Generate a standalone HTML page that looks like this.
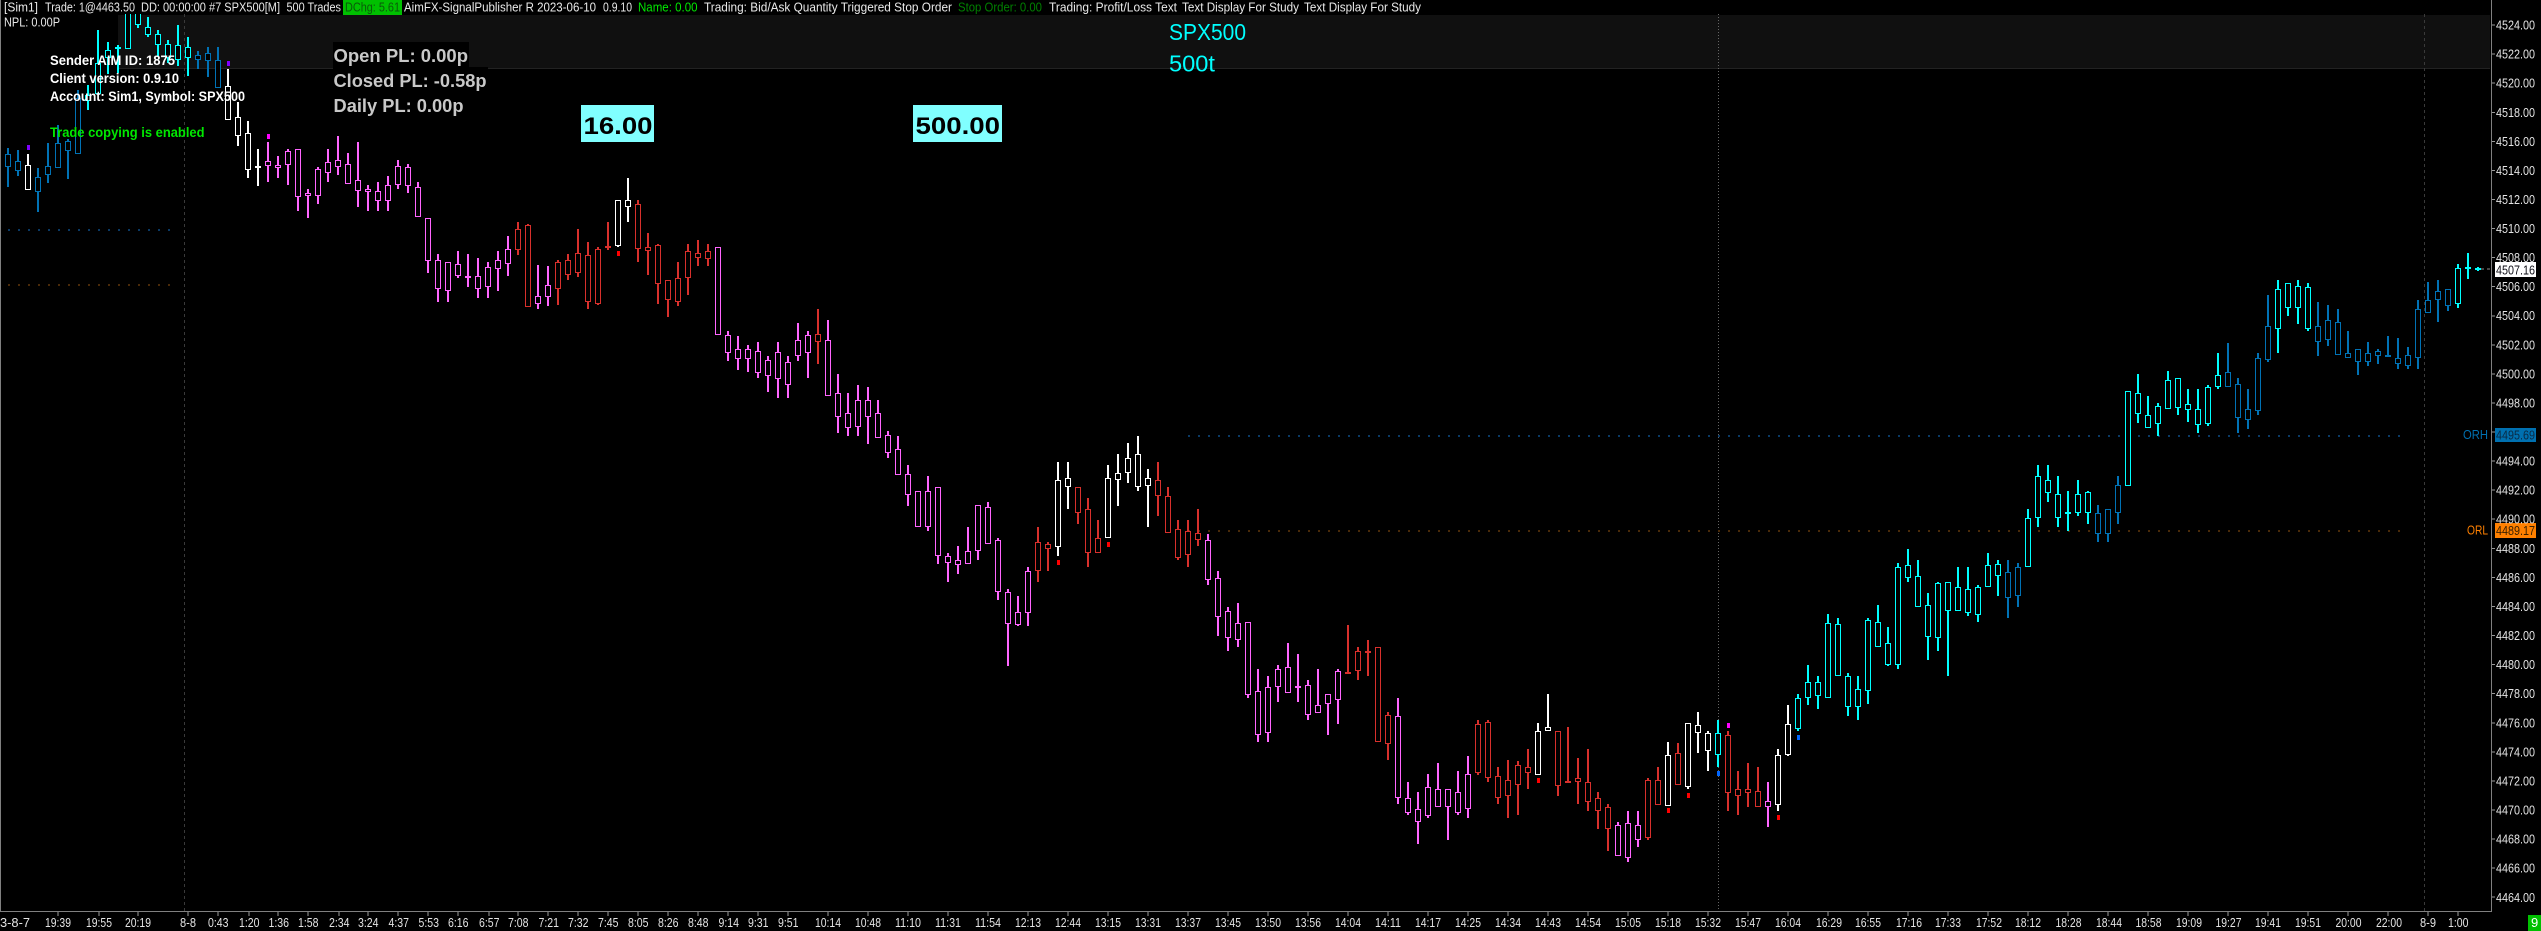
<!DOCTYPE html>
<html><head><meta charset="utf-8"><title>SPX500 chart</title>
<style>
html,body{margin:0;padding:0;background:#000;width:2541px;height:931px;overflow:hidden}
svg{position:absolute;left:0;top:0;display:block}
text{font-family:"Liberation Sans",sans-serif;white-space:pre}
.h{font-size:12.5px;fill:#e8e8e8}
.p{font-size:13px;fill:#e4e4e4}
.t{font-size:13px;fill:#e4e4e4}
.s{font-size:13.5px;font-weight:bold;fill:#fff}
.o{font-size:18px;font-weight:bold;fill:#c8c8c8}
.b{font-size:24px;font-weight:bold;fill:#000}
.c{font-size:23px;fill:#00ffff}
</style></head><body>
<svg width="2541" height="931" viewBox="0 0 2541 931" xmlns="http://www.w3.org/2000/svg">
<rect width="2541" height="931" fill="#000"/>
<rect x="118" y="15" width="2372" height="53" fill="#101010"/>
<rect x="118" y="68" width="2372" height="1" fill="#222"/>
<g shape-rendering="crispEdges">
<path d="M184.5 14V911M2424.5 14V911" stroke="#3a3a3a" stroke-width="1" stroke-dasharray="3 3" fill="none"/>
<path d="M1718.5 14V911" stroke="#666" stroke-width="1" stroke-dasharray="1 2" fill="none"/>
<path d="M8 230H170" stroke="#0a3a66" stroke-width="2" stroke-dasharray="2 8" fill="none"/>
<path d="M8 285H170" stroke="#4a2a08" stroke-width="2" stroke-dasharray="2 8" fill="none"/>
<path d="M1188 436H2400" stroke="#0a3a66" stroke-width="2" stroke-dasharray="2 8" fill="none"/>
<path d="M1188 531H2400" stroke="#4a2a08" stroke-width="2" stroke-dasharray="2 8" fill="none"/>
<g id="c"></g>
<rect x="0" y="0" width="2490" height="14" fill="#000"/>
<rect x="333" y="42" width="136" height="26" fill="#000"/>
<rect x="333" y="67" width="155" height="25" fill="#000"/>
<rect x="0" y="0" width="1" height="911" fill="#808080"/>
<rect x="2491" y="0" width="1" height="912" fill="#808080"/>
<rect x="0" y="911" width="2492" height="1" fill="#808080"/>
<rect x="343" y="0" width="59" height="15" fill="#00c000"/>
<path d="M2492 25h3M2492 54h3M2492 83h3M2492 112.500h3M2492 141.500h3M2492 170.500h3M2492 199.500h3M2492 228.500h3M2492 257.500h3M2492 286.500h3M2492 316h3M2492 345h3M2492 374h3M2492 403h3M2492 432h3M2492 461h3M2492 490h3M2492 519h3M2492 548.500h3M2492 577.500h3M2492 606.500h3M2492 635.500h3M2492 664.500h3M2492 693.500h3M2492 723h3M2492 752h3M2492 781h3M2492 810h3M2492 839h3M2492 868h3M2492 897h3" stroke="#9a9a9a" stroke-width="1"/>
<path d="M58 912v4M99 912v4M138 912v4M188 912v4M218 912v4M249 912v4M278 912v4M308 912v4M339 912v4M368 912v4M398 912v4M428 912v4M458 912v4M489 912v4M518 912v4M548 912v4M578 912v4M608 912v4M638 912v4M668 912v4M698 912v4M728 912v4M758 912v4M788 912v4M828 912v4M868 912v4M908 912v4M948 912v4M988 912v4M1028 912v4M1068 912v4M1108 912v4M1148 912v4M1188 912v4M1228 912v4M1268 912v4M1308 912v4M1348 912v4M1388 912v4M1428 912v4M1468 912v4M1508 912v4M1548 912v4M1588 912v4M1628 912v4M1668 912v4M1708 912v4M1748 912v4M1788 912v4M1828 912v4M1868 912v4M1908 912v4M1948 912v4M1988 912v4M2028 912v4M2068 912v4M2108 912v4M2148 912v4M2188 912v4M2228 912v4M2268 912v4M2308 912v4M2348 912v4M2388 912v4M2428 912v4M2458 912v4" stroke="#9a9a9a" stroke-width="1"/>
<path d="M2481 269h10" stroke="#8a8a8a" stroke-width="1" stroke-dasharray="3 3"/>
<rect x="2495" y="262" width="41" height="15" fill="#fff"/>
<rect x="2495" y="428" width="41" height="14" fill="#0070b0"/>
<rect x="2495" y="523" width="41" height="15" fill="#ff8000"/>
<rect x="581" y="105" width="73" height="37" fill="#80ffff"/>
<rect x="913" y="105" width="89" height="37" fill="#80ffff"/>
<rect x="2528" y="915" width="13" height="16" fill="#00c000"/>
</g>
<g lengthAdjust="spacingAndGlyphs">
<text class="h" x="4" y="11.500" textLength="34" lengthAdjust="spacingAndGlyphs">[Sim1]</text>
<text class="h" x="45" y="11.500" textLength="90" lengthAdjust="spacingAndGlyphs">Trade: 1@4463.50</text>
<text class="h" x="141" y="11.500" textLength="139" lengthAdjust="spacingAndGlyphs">DD: 00:00:00 #7 SPX500[M]</text>
<text class="h" x="286.500" y="11.500" textLength="54.500" lengthAdjust="spacingAndGlyphs">500 Trades</text>
<text class="h" x="345" y="11.500" textLength="55" lengthAdjust="spacingAndGlyphs" style="fill:#0a5a0a">DChg: 5.61</text>
<text class="h" x="404" y="11.500" textLength="192" lengthAdjust="spacingAndGlyphs">AimFX-SignalPublisher R 2023-06-10</text>
<text class="h" x="603" y="11.500" textLength="29" lengthAdjust="spacingAndGlyphs">0.9.10</text>
<text class="h" x="638" y="11.500" textLength="59.500" lengthAdjust="spacingAndGlyphs" style="fill:#00e800">Name: 0.00</text>
<text class="h" x="704" y="11.500" textLength="248" lengthAdjust="spacingAndGlyphs">Trading: Bid/Ask Quantity Triggered Stop Order</text>
<text class="h" x="958" y="11.500" textLength="84" lengthAdjust="spacingAndGlyphs" style="fill:#008000">Stop Order: 0.00</text>
<text class="h" x="1049" y="11.500" textLength="128" lengthAdjust="spacingAndGlyphs">Trading: Profit/Loss Text</text>
<text class="h" x="1182" y="11.500" textLength="117" lengthAdjust="spacingAndGlyphs">Text Display For Study</text>
<text class="h" x="1304" y="11.500" textLength="117" lengthAdjust="spacingAndGlyphs">Text Display For Study</text>
<text class="h" x="4" y="26.500" textLength="56" lengthAdjust="spacingAndGlyphs">NPL: 0.00P</text>
<text class="s" x="50" y="65" textLength="125" lengthAdjust="spacingAndGlyphs">Sender AIM ID: 1875</text>
<text class="s" x="50" y="83" textLength="129" lengthAdjust="spacingAndGlyphs">Client version: 0.9.10</text>
<text class="s" x="50" y="101" textLength="195" lengthAdjust="spacingAndGlyphs">Account: Sim1, Symbol: SPX500</text>
<text class="s" x="50" y="137" textLength="154.500" lengthAdjust="spacingAndGlyphs" style="fill:#00e800">Trade copying is enabled</text>
<text class="o" x="333.500" y="62" textLength="134.500" lengthAdjust="spacingAndGlyphs">Open PL: 0.00p</text>
<text class="o" x="333.500" y="87" textLength="153" lengthAdjust="spacingAndGlyphs">Closed PL: -0.58p</text>
<text class="o" x="333.500" y="112" textLength="130" lengthAdjust="spacingAndGlyphs">Daily PL: 0.00p</text>
<text class="b" x="583.500" y="134" textLength="69" lengthAdjust="spacingAndGlyphs">16.00</text>
<text class="b" x="915.500" y="134" textLength="84.500" lengthAdjust="spacingAndGlyphs">500.00</text>
<text class="c" x="1169" y="40" textLength="77" lengthAdjust="spacingAndGlyphs">SPX500</text>
<text class="c" x="1169" y="71.500" textLength="46" lengthAdjust="spacingAndGlyphs">500t</text>
<text class="p" x="2496" y="29.500" textLength="39" lengthAdjust="spacingAndGlyphs">4524.00</text>
<text class="p" x="2496" y="58.500" textLength="39" lengthAdjust="spacingAndGlyphs">4522.00</text>
<text class="p" x="2496" y="87.500" textLength="39" lengthAdjust="spacingAndGlyphs">4520.00</text>
<text class="p" x="2496" y="117" textLength="39" lengthAdjust="spacingAndGlyphs">4518.00</text>
<text class="p" x="2496" y="146" textLength="39" lengthAdjust="spacingAndGlyphs">4516.00</text>
<text class="p" x="2496" y="175" textLength="39" lengthAdjust="spacingAndGlyphs">4514.00</text>
<text class="p" x="2496" y="204" textLength="39" lengthAdjust="spacingAndGlyphs">4512.00</text>
<text class="p" x="2496" y="233" textLength="39" lengthAdjust="spacingAndGlyphs">4510.00</text>
<text class="p" x="2496" y="262" textLength="39" lengthAdjust="spacingAndGlyphs">4508.00</text>
<text class="p" x="2496" y="291" textLength="39" lengthAdjust="spacingAndGlyphs">4506.00</text>
<text class="p" x="2496" y="320" textLength="39" lengthAdjust="spacingAndGlyphs">4504.00</text>
<text class="p" x="2496" y="349.500" textLength="39" lengthAdjust="spacingAndGlyphs">4502.00</text>
<text class="p" x="2496" y="378.500" textLength="39" lengthAdjust="spacingAndGlyphs">4500.00</text>
<text class="p" x="2496" y="407.500" textLength="39" lengthAdjust="spacingAndGlyphs">4498.00</text>
<text class="p" x="2496" y="465.500" textLength="39" lengthAdjust="spacingAndGlyphs">4494.00</text>
<text class="p" x="2496" y="494.500" textLength="39" lengthAdjust="spacingAndGlyphs">4492.00</text>
<text class="p" x="2496" y="523.500" textLength="39" lengthAdjust="spacingAndGlyphs">4490.00</text>
<text class="p" x="2496" y="553" textLength="39" lengthAdjust="spacingAndGlyphs">4488.00</text>
<text class="p" x="2496" y="582" textLength="39" lengthAdjust="spacingAndGlyphs">4486.00</text>
<text class="p" x="2496" y="611" textLength="39" lengthAdjust="spacingAndGlyphs">4484.00</text>
<text class="p" x="2496" y="640" textLength="39" lengthAdjust="spacingAndGlyphs">4482.00</text>
<text class="p" x="2496" y="669" textLength="39" lengthAdjust="spacingAndGlyphs">4480.00</text>
<text class="p" x="2496" y="698" textLength="39" lengthAdjust="spacingAndGlyphs">4478.00</text>
<text class="p" x="2496" y="727.500" textLength="39" lengthAdjust="spacingAndGlyphs">4476.00</text>
<text class="p" x="2496" y="756.500" textLength="39" lengthAdjust="spacingAndGlyphs">4474.00</text>
<text class="p" x="2496" y="785.500" textLength="39" lengthAdjust="spacingAndGlyphs">4472.00</text>
<text class="p" x="2496" y="814.500" textLength="39" lengthAdjust="spacingAndGlyphs">4470.00</text>
<text class="p" x="2496" y="843.500" textLength="39" lengthAdjust="spacingAndGlyphs">4468.00</text>
<text class="p" x="2496" y="872.500" textLength="39" lengthAdjust="spacingAndGlyphs">4466.00</text>
<text class="p" x="2496" y="902" textLength="39" lengthAdjust="spacingAndGlyphs">4464.00</text>
<rect x="2495" y="262" width="41" height="15" fill="#fff"/>
<text class="p" x="2496" y="274.500" textLength="39" lengthAdjust="spacingAndGlyphs" style="fill:#101018">4507.16</text>
<text class="p" x="2496" y="439.500" textLength="39" lengthAdjust="spacingAndGlyphs" style="fill:#0a2a44">4495.69</text>
<text class="p" x="2496" y="535" textLength="39" lengthAdjust="spacingAndGlyphs" style="fill:#3a2000">4489.17</text>
<text class="p" x="2463" y="439" textLength="25" lengthAdjust="spacingAndGlyphs" style="fill:#0070b0">ORH</text>
<text class="p" x="2467" y="534.500" textLength="21" lengthAdjust="spacingAndGlyphs" style="fill:#ff8000">ORL</text>
<text class="t" x="0" y="927" textLength="30" lengthAdjust="spacingAndGlyphs">3-8-7</text>
<text class="t" x="45" y="927" textLength="26" lengthAdjust="spacingAndGlyphs">19:39</text>
<text class="t" x="86" y="927" textLength="26" lengthAdjust="spacingAndGlyphs">19:55</text>
<text class="t" x="125" y="927" textLength="26" lengthAdjust="spacingAndGlyphs">20:19</text>
<text class="t" x="180" y="927" textLength="16" lengthAdjust="spacingAndGlyphs">8-8</text>
<text class="t" x="208" y="927" textLength="20.500" lengthAdjust="spacingAndGlyphs">0:43</text>
<text class="t" x="239" y="927" textLength="20.500" lengthAdjust="spacingAndGlyphs">1:20</text>
<text class="t" x="268.500" y="927" textLength="20.500" lengthAdjust="spacingAndGlyphs">1:36</text>
<text class="t" x="298" y="927" textLength="20.500" lengthAdjust="spacingAndGlyphs">1:58</text>
<text class="t" x="329" y="927" textLength="20.500" lengthAdjust="spacingAndGlyphs">2:34</text>
<text class="t" x="358" y="927" textLength="20.500" lengthAdjust="spacingAndGlyphs">3:24</text>
<text class="t" x="388.500" y="927" textLength="20.500" lengthAdjust="spacingAndGlyphs">4:37</text>
<text class="t" x="418.500" y="927" textLength="20.500" lengthAdjust="spacingAndGlyphs">5:53</text>
<text class="t" x="448" y="927" textLength="20.500" lengthAdjust="spacingAndGlyphs">6:16</text>
<text class="t" x="479" y="927" textLength="20.500" lengthAdjust="spacingAndGlyphs">6:57</text>
<text class="t" x="508" y="927" textLength="20.500" lengthAdjust="spacingAndGlyphs">7:08</text>
<text class="t" x="538.500" y="927" textLength="20.500" lengthAdjust="spacingAndGlyphs">7:21</text>
<text class="t" x="568" y="927" textLength="20.500" lengthAdjust="spacingAndGlyphs">7:32</text>
<text class="t" x="598" y="927" textLength="20.500" lengthAdjust="spacingAndGlyphs">7:45</text>
<text class="t" x="628" y="927" textLength="20.500" lengthAdjust="spacingAndGlyphs">8:05</text>
<text class="t" x="658" y="927" textLength="20.500" lengthAdjust="spacingAndGlyphs">8:26</text>
<text class="t" x="688" y="927" textLength="20.500" lengthAdjust="spacingAndGlyphs">8:48</text>
<text class="t" x="718.500" y="927" textLength="20.500" lengthAdjust="spacingAndGlyphs">9:14</text>
<text class="t" x="748" y="927" textLength="20.500" lengthAdjust="spacingAndGlyphs">9:31</text>
<text class="t" x="778" y="927" textLength="20.500" lengthAdjust="spacingAndGlyphs">9:51</text>
<text class="t" x="815" y="927" textLength="26" lengthAdjust="spacingAndGlyphs">10:14</text>
<text class="t" x="855" y="927" textLength="26" lengthAdjust="spacingAndGlyphs">10:48</text>
<text class="t" x="895" y="927" textLength="26" lengthAdjust="spacingAndGlyphs">11:10</text>
<text class="t" x="935" y="927" textLength="26" lengthAdjust="spacingAndGlyphs">11:31</text>
<text class="t" x="975" y="927" textLength="26" lengthAdjust="spacingAndGlyphs">11:54</text>
<text class="t" x="1015" y="927" textLength="26" lengthAdjust="spacingAndGlyphs">12:13</text>
<text class="t" x="1055" y="927" textLength="26" lengthAdjust="spacingAndGlyphs">12:44</text>
<text class="t" x="1095" y="927" textLength="26" lengthAdjust="spacingAndGlyphs">13:15</text>
<text class="t" x="1135" y="927" textLength="26" lengthAdjust="spacingAndGlyphs">13:31</text>
<text class="t" x="1175" y="927" textLength="26" lengthAdjust="spacingAndGlyphs">13:37</text>
<text class="t" x="1215" y="927" textLength="26" lengthAdjust="spacingAndGlyphs">13:45</text>
<text class="t" x="1255" y="927" textLength="26" lengthAdjust="spacingAndGlyphs">13:50</text>
<text class="t" x="1295" y="927" textLength="26" lengthAdjust="spacingAndGlyphs">13:56</text>
<text class="t" x="1335" y="927" textLength="26" lengthAdjust="spacingAndGlyphs">14:04</text>
<text class="t" x="1375" y="927" textLength="26" lengthAdjust="spacingAndGlyphs">14:11</text>
<text class="t" x="1415" y="927" textLength="26" lengthAdjust="spacingAndGlyphs">14:17</text>
<text class="t" x="1455" y="927" textLength="26" lengthAdjust="spacingAndGlyphs">14:25</text>
<text class="t" x="1495" y="927" textLength="26" lengthAdjust="spacingAndGlyphs">14:34</text>
<text class="t" x="1535" y="927" textLength="26" lengthAdjust="spacingAndGlyphs">14:43</text>
<text class="t" x="1575" y="927" textLength="26" lengthAdjust="spacingAndGlyphs">14:54</text>
<text class="t" x="1615" y="927" textLength="26" lengthAdjust="spacingAndGlyphs">15:05</text>
<text class="t" x="1655" y="927" textLength="26" lengthAdjust="spacingAndGlyphs">15:18</text>
<text class="t" x="1695" y="927" textLength="26" lengthAdjust="spacingAndGlyphs">15:32</text>
<text class="t" x="1735" y="927" textLength="26" lengthAdjust="spacingAndGlyphs">15:47</text>
<text class="t" x="1775" y="927" textLength="26" lengthAdjust="spacingAndGlyphs">16:04</text>
<text class="t" x="1816" y="927" textLength="26" lengthAdjust="spacingAndGlyphs">16:29</text>
<text class="t" x="1855" y="927" textLength="26" lengthAdjust="spacingAndGlyphs">16:55</text>
<text class="t" x="1896" y="927" textLength="26" lengthAdjust="spacingAndGlyphs">17:16</text>
<text class="t" x="1935" y="927" textLength="26" lengthAdjust="spacingAndGlyphs">17:33</text>
<text class="t" x="1976" y="927" textLength="26" lengthAdjust="spacingAndGlyphs">17:52</text>
<text class="t" x="2015" y="927" textLength="26" lengthAdjust="spacingAndGlyphs">18:12</text>
<text class="t" x="2055.500" y="927" textLength="26" lengthAdjust="spacingAndGlyphs">18:28</text>
<text class="t" x="2096" y="927" textLength="26" lengthAdjust="spacingAndGlyphs">18:44</text>
<text class="t" x="2135.500" y="927" textLength="26" lengthAdjust="spacingAndGlyphs">18:58</text>
<text class="t" x="2176" y="927" textLength="26" lengthAdjust="spacingAndGlyphs">19:09</text>
<text class="t" x="2215.500" y="927" textLength="26" lengthAdjust="spacingAndGlyphs">19:27</text>
<text class="t" x="2255" y="927" textLength="26" lengthAdjust="spacingAndGlyphs">19:41</text>
<text class="t" x="2295" y="927" textLength="26" lengthAdjust="spacingAndGlyphs">19:51</text>
<text class="t" x="2335.500" y="927" textLength="26" lengthAdjust="spacingAndGlyphs">20:00</text>
<text class="t" x="2376" y="927" textLength="26" lengthAdjust="spacingAndGlyphs">22:00</text>
<text class="t" x="2420" y="927" textLength="16" lengthAdjust="spacingAndGlyphs">8-9</text>
<text class="t" x="2448" y="927" textLength="20.500" lengthAdjust="spacingAndGlyphs">1:00</text>
<text x="2531" y="927" style="font-size:13px;fill:#fff">9</text>
</g>
</svg>
<script>
var D="b:148,154,166,187;150,161,170,176|w:154,165,189,190|b:168,177,191,212;143,166,174,183;125,143,167,168;139,141,150,179;90,98,153,154|c:85,95,100,110;30,63,93,93;42,50,57,74;45,48,48,73;5,10,48,48;5,8,24,28;17,27,34,37;30,34,44,57;40,44,57,63;25,45,59,66;37,47,57,76|b:51,55,59,69;47,53,60,77;47,60,87,87|w:69,86,119,119;102,117,135,146;121,133,169,178;149,167,167,186|p:142,161,165,182;156,165,167,178;149,151,164,185;149,149,196,211;189,193,195,218;167,169,195,204;149,162,172,182;136,160,166,175;153,164,183,183;142,180,190,207;185,189,191,211;182,191,200,211;176,185,200,211;160,166,184,189;164,167,185,193;182,187,216,217;218,218,260,273;254,260,288,302;262,262,290,302;251,264,275,278;254,277,277,287;258,276,288,298;262,267,286,298;251,260,268,291;236,249,263,276|r:222,229,249,255;224,225,306,306|p:265,296,303,309;266,285,296,306|r:260,262,288,305;254,260,274,280;229,253,272,277;242,255,301,309;247,249,303,305;222,247,247,250|w:200,200,245,247;178,200,206,222|r:200,204,248,262;233,247,250,275;244,245,283,304;280,280,299,317;262,278,301,306;244,251,277,295;240,253,257,266;244,251,258,266|p:247,247,334,335;331,335,352,361;336,349,358,370;345,349,358,372;342,351,372,378;356,360,375,392;342,352,378,398;356,362,384,398;323,340,355,361;331,335,352,378|r:309,334,341,364|p:320,340,395,396;374,393,416,433;393,413,427,436;385,400,426,436;387,400,416,444;400,413,437,437;431,435,452,458;436,449,474,474;465,474,494,506;491,491,526,527;476,491,526,531;487,487,555,564;553,556,562,582;546,560,564,574;527,551,563,564;505,505,550,560;502,507,543,543;538,540,591,600;589,592,623,666;596,612,624,626;567,571,612,626|r:527,542,570,582;542,544,548,571|w:462,480,546,556;462,478,486,509|r:487,487,512,524;498,509,552,567;520,538,552,553|w:465,478,537,538;454,473,479,506;443,458,472,483;436,454,486,491;469,478,485,527|r:462,480,495,516;487,496,532,532;520,529,557,560;520,531,554,567;509,533,539,546|p:534,540,579,585;571,578,616,636;607,611,637,651;603,623,639,647;622,622,694,698;669,691,734,742;676,687,732,742;665,669,686,702;643,667,692,692;654,687,687,702;680,685,714,720;669,705,712,713;694,694,703,735;669,671,699,724|r:625,673,673,674;647,651,670,680;640,652,652,676;647,647,741,742;712,715,743,760|p:698,716,797,804;782,798,812,815;792,809,821,844;774,787,815,818;763,789,806,807;789,789,806,840;771,792,812,815;756,774,808,818|r:720,724,772,775;720,722,777,782;767,776,797,804;760,780,795,818;761,765,784,815;749,767,772,789|w:723,731,774,774;694,727,730,731|r:731,731,785,796;727,782,782,783;758,778,781,804;749,782,801,811;792,798,810,829;804,807,828,851|p:822,825,855,855;811,823,857,862;811,825,839,847|r:778,780,837,840;767,780,804,804|w:742,755,805,805|r:743,753,784,784|w:723,723,786,789;712,725,732,753;731,733,750,771|c:720,733,754,767|r:731,735,792,811;771,789,795,815;763,789,792,807;767,791,806,806|p:782,801,806,827|w:749,755,804,811;705,724,754,756|c:694,698,728,731;665,682,697,705;676,682,695,709;614,623,697,698;618,624,675,675;673,676,706,716;676,689,706,720;618,620,690,704;605,622,646,647;627,643,664,666;563,567,664,669;549,565,577,582;560,576,606,607;593,605,636,660;582,583,637,651;582,582,610,676;567,587,610,611;567,589,612,616;585,587,614,622;553,565,586,587;560,564,575,596|b:560,572,597,618;563,567,595,607|c:509,518,566,566;465,476,517,527;465,480,492,502;476,494,517,527;491,513,513,531;480,494,512,516;491,492,512,524|b:505,513,533,542;509,509,533,542;476,485,512,524|c:391,391,485,485;374,393,413,423;396,415,427,427;403,406,423,436;371,380,408,408;378,378,407,415;389,404,409,422;389,409,424,433;385,387,423,426;353,375,386,389|b:343,372,386,386;378,384,417,433;389,409,419,429;353,358,410,415;295,326,359,362|c:280,289,328,353;283,283,307,316;280,286,307,324;283,287,328,331|b:302,326,341,356;305,320,339,346;309,322,354,354;331,353,357,357;349,349,361,375;342,353,361,366;349,351,355,364;336,356,356,357;338,358,363,369;347,355,365,369;300,309,357,369;282,300,312,312;280,291,299,322;289,289,305,311|c:264,268,303,308;253,268,268,279;267,269,269,271";
var C={b:"#0072b5",c:"#00ffff",w:"#ffffff",p:"#ff66ff",r:"#d8302c"};
var s="",i=0;
D.split("|").forEach(function(g){var col=C[g[0]];g.slice(2).split(";").forEach(function(r){
var v=r.split(",").map(Number),x=8+10*i,h=v[0],t=v[1],u=v[2],l=v[3];
if(t>h)s+='<rect x="'+(x-1)+'" y="'+h+'" width="2" height="'+(t-h)+'" fill="'+col+'"/>';
if(l>u)s+='<rect x="'+(x-1)+'" y="'+u+'" width="2" height="'+(l-u)+'" fill="'+col+'"/>';
if(u===t)s+='<rect x="'+(x-3)+'" y="'+(t-1)+'" width="6" height="2" fill="'+col+'"/>';
else s+='<rect x="'+(x-2.5)+'" y="'+(t+.5)+'" width="5" height="'+(u-t)+'" fill="#000" stroke="'+col+'" stroke-width="1"/>';
i++;});});
[[2,48,"#8000ff"],[22,63,"#8000ff"],[26,136,"#ff00ff"],[61,253,"#ff0000"],[105,562,"#ff0000"],[110,544,"#ff0000"],[153,780,"#ff0000"],[166,810,"#ff0000"],[168,795,"#ff0000"],[171,773,"#0066ff"],[172,725,"#ff00ff"],[177,817,"#ff0000"],[179,737,"#0066ff"]].forEach(function(d){
var x=8+10*d[0],y=d[0]==2?147:d[1];
s+='<rect x="'+(x-1)+'" y="'+(y-2)+'" width="3" height="5" fill="'+d[2]+'"/>';});
document.getElementById("c").innerHTML=s;
</script>
</body></html>
